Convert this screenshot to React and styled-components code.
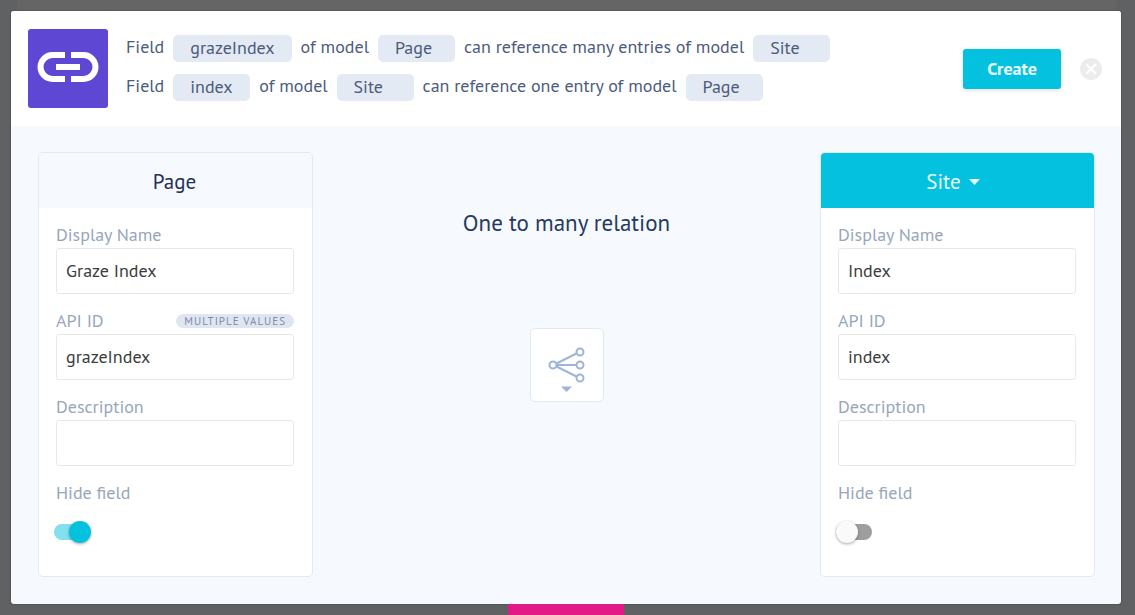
import React, { useId, useState } from "react";
import styled, { createGlobalStyle } from "styled-components";

const GlobalStyle = createGlobalStyle`
  * { box-sizing: border-box; }
  body {
    margin: 0;
    background: #5f6163;
    font-family: "PT Sans", Lato, "Noto Sans", sans-serif;
    font-size: 18px;
    line-height: 24px;
    color: #4c5b7c;
  }
  button, input, select { font: inherit; }
`;

const Page = styled.div`
  height: 100vh;
  overflow: hidden;
  padding: 11px 14px 0 11px;
  background: linear-gradient(#656565, #656565) 17px 0 / calc(100% - 35px) 11px no-repeat;
`;

const Modal = styled.section`
  border-radius: 3px;
  overflow: hidden;
  background: #f6f9fe;
  box-shadow: 0 0 2px rgba(0, 0, 0, 0.4);
`;

const Header = styled.header`
  display: flex;
  align-items: center;
  padding: 18px 19px 18px 17px;
  background: #fff;
`;

const Logo = styled.div`
  flex: none;
  width: 80px;
  height: 79px;
  border-radius: 3px;
  background: #5e48d3;
  svg { display: block; width: 100%; height: 100%; }
`;

const Sentences = styled.div`
  flex: 1;
  display: flex;
  flex-direction: column;
  gap: 12px;
  margin-left: 18px;
  padding-bottom: 2px;
`;

const Sentence = styled.p`
  display: flex;
  align-items: flex-start;
  gap: 9px;
  margin: 0;
  white-space: nowrap;
`;

const Chip = styled.span`
  min-width: 77px;
  height: 27px;
  padding: 1px 17px;
  border-radius: 5px;
  background: #e4eaf3;
`;

const CreateButton = styled.button`
  flex: none;
  width: 98px;
  height: 40px;
  padding: 0;
  border: 0;
  border-radius: 3px;
  background: #05c1e0;
  box-shadow: 0 1px 4px rgba(0, 0, 0, 0.15);
  color: #e9fbfe;
  font-weight: 700;
`;

const CloseButton = styled.button`
  flex: none;
  width: 22px;
  height: 22px;
  margin-left: 19px;
  padding: 0;
  border: 0;
  background: none;
  svg { display: block; }
`;

const Body = styled.div`
  display: flex;
  justify-content: space-between;
  padding: 26px 26px 27px 27px;
`;

const Card = styled.section`
  flex: none;
  width: 275px;
  border: 1px solid #e1e9f3;
  border-radius: 5px;
  overflow: hidden;
  background: #fff;
`;

const CardHeader = styled.div`
  display: flex;
  align-items: center;
  justify-content: center;
  gap: 8px;
  height: 55px;
  padding: ${(p) => (p.$active ? "2px 9px 0 0" : "2px 2px 0 0")};
  background: ${(p) => (p.$active ? "#05c1e0" : "#f6f9fe")};
  color: ${(p) => (p.$active ? "#e6fafd" : "#1f3157")};
  font-size: 21px;
`;

const CardTitle = styled.h2`
  margin: 0;
  font-size: 21px;
  font-weight: 400;
`;

const ModelSelect = styled.select`
  appearance: none;
  field-sizing: content;
  padding: 0;
  border: 0;
  background: none;
  color: inherit;
`;

const CardBody = styled.div`
  display: flex;
  flex-direction: column;
  gap: 16px;
  padding: 16px 18px 36px 17px;
`;

const Field = styled.div`
  display: flex;
  flex-direction: column;
`;

const LabelRow = styled.div`
  display: flex;
  align-items: center;
  justify-content: space-between;
  height: 24px;
  padding-bottom: 3px;
  color: #97a6bb;
`;

const Badge = styled.span`
  height: 14px;
  padding: 0 8px;
  border-radius: 7px;
  background: #e0e6f1;
  color: #7d8ba6;
  font-size: 11px;
  line-height: 14px;
  letter-spacing: 1px;
`;

const TextInput = styled.input`
  width: 100%;
  height: 46px;
  padding: 0 9px 2px;
  border: 1px solid #e8e8e8;
  border-radius: 3px;
  background: #fff;
  color: #3c3c3c;
  outline: 0;
`;

const Switch = styled.input`
  appearance: none;
  position: relative;
  width: 36px;
  height: 16px;
  margin: 18px 0 0 -2px;
  border-radius: 8px;
  background: ${(p) => (p.checked ? "#82e0ef" : "#9e9e9e")};
  &::before {
    content: "";
    position: absolute;
    top: -3px;
    left: ${(p) => (p.checked ? "15px" : "0")};
    width: 22px;
    height: 22px;
    border-radius: 50%;
    background: ${(p) => (p.checked ? "#05c1e0" : "#fafafa")};
    box-shadow: 0 1px 3px rgba(0, 0, 0, 0.35);
  }
`;

const Relation = styled.div`
  flex: 1;
  display: flex;
  flex-direction: column;
  align-items: center;
  gap: 91px;
  padding-top: 57px;
`;

const RelationTitle = styled.h1`
  margin: 0;
  color: #263a5f;
  font-size: 23px;
  font-weight: 400;
  line-height: 28px;
`;

const RelationButton = styled.button`
  width: 74px;
  height: 74px;
  padding: 0;
  border: 1px solid #e1e9f3;
  border-radius: 5px;
  background: #fff;
  svg { display: block; margin: auto; }
`;

const AddButton = styled.button`
  display: block;
  width: 116px;
  height: 34px;
  margin: 0 auto;
  padding: 0;
  border: 0;
  background: #e21a87;
  color: #f9c6e0;
`;

function TextField({ label, value, badge }) {
  const id = useId();
  const [text, setText] = useState(value);
  return (
    <Field>
      <LabelRow>
        <label htmlFor={id}>{label}</label>
        {badge && <Badge>{badge}</Badge>}
      </LabelRow>
      <TextInput id={id} value={text} onChange={(e) => setText(e.target.value)} />
    </Field>
  );
}

function HideField({ initial }) {
  const id = useId();
  const [on, setOn] = useState(initial);
  return (
    <Field>
      <LabelRow>
        <label htmlFor={id}>Hide field</label>
      </LabelRow>
      <Switch id={id} type="checkbox" checked={on} onChange={(e) => setOn(e.target.checked)} />
    </Field>
  );
}

function Fields({ name, apiId, badge, hidden }) {
  return (
    <CardBody>
      <TextField label="Display Name" value={name} />
      <TextField label="API ID" value={apiId} badge={badge} />
      <TextField label="Description" value="" />
      <HideField initial={hidden} />
    </CardBody>
  );
}

export default function App() {
  return (
    <>
      <GlobalStyle />
      <Page>
        <Modal>
          <Header>
            <Logo>
              <svg viewBox="0 0 80 79" fill="none" stroke="#fff" strokeWidth="6" aria-hidden="true">
                <path d="M37 26H24.500a12 12 0 0 0 0 24H37M43 26H55.500a12 12 0 0 1 0 24H43M28 38H52" />
              </svg>
            </Logo>
            <Sentences>
              <Sentence>
                <span>Field</span>
                <Chip>grazeIndex</Chip>
                <span>of model</span>
                <Chip>Page</Chip>
                <span>can reference many entries of model</span>
                <Chip>Site</Chip>
              </Sentence>
              <Sentence>
                <span>Field</span>
                <Chip>index</Chip>
                <span>of model</span>
                <Chip>Site</Chip>
                <span>can reference one entry of model</span>
                <Chip>Page</Chip>
              </Sentence>
            </Sentences>
            <CreateButton type="button">Create</CreateButton>
            <CloseButton type="button" aria-label="Close">
              <svg width="22" height="22" viewBox="0 0 22 22" aria-hidden="true">
                <circle cx="11" cy="11" r="11" fill="#ececec" />
                <path d="M6.200 6.200L15.800 15.800M15.800 6.200L6.200 15.800" stroke="#fff" strokeWidth="2.200" />
              </svg>
            </CloseButton>
          </Header>
          <Body>
            <Card>
              <CardHeader>
                <CardTitle>Page</CardTitle>
              </CardHeader>
              <Fields name="Graze Index" apiId="grazeIndex" badge="MULTIPLE VALUES" hidden />
            </Card>
            <Relation>
              <RelationTitle>One to many relation</RelationTitle>
              <RelationButton type="button" aria-label="Relation type" aria-haspopup="menu">
                <svg width="72" height="72" viewBox="0 0 72 72" fill="none" stroke="#9db6d7" strokeWidth="2" aria-hidden="true">
                  <path d="M25.500 34.500L45.500 24.500M26 36H45.500M25.500 37.500L45.500 47.500" />
                  <circle cx="22" cy="36" r="3.500" />
                  <circle cx="49" cy="23" r="3.500" />
                  <circle cx="49" cy="36" r="3.500" />
                  <circle cx="49" cy="49" r="3.500" />
                  <path d="M30 57.500H41L35.500 63Z" fill="#9db6d7" stroke="none" />
                </svg>
              </RelationButton>
            </Relation>
            <Card>
              <CardHeader $active>
                <ModelSelect aria-label="Related model" defaultValue="Site">
                  <option>Site</option>
                </ModelSelect>
                <svg width="11" height="6" viewBox="0 0 11 6" aria-hidden="true">
                  <path d="M0 0H11L5.500 6Z" fill="#e6fafd" />
                </svg>
              </CardHeader>
              <Fields name="Index" apiId="index" hidden={false} />
            </Card>
          </Body>
        </Modal>
        <AddButton type="button">Add field</AddButton>
      </Page>
    </>
  );
}
